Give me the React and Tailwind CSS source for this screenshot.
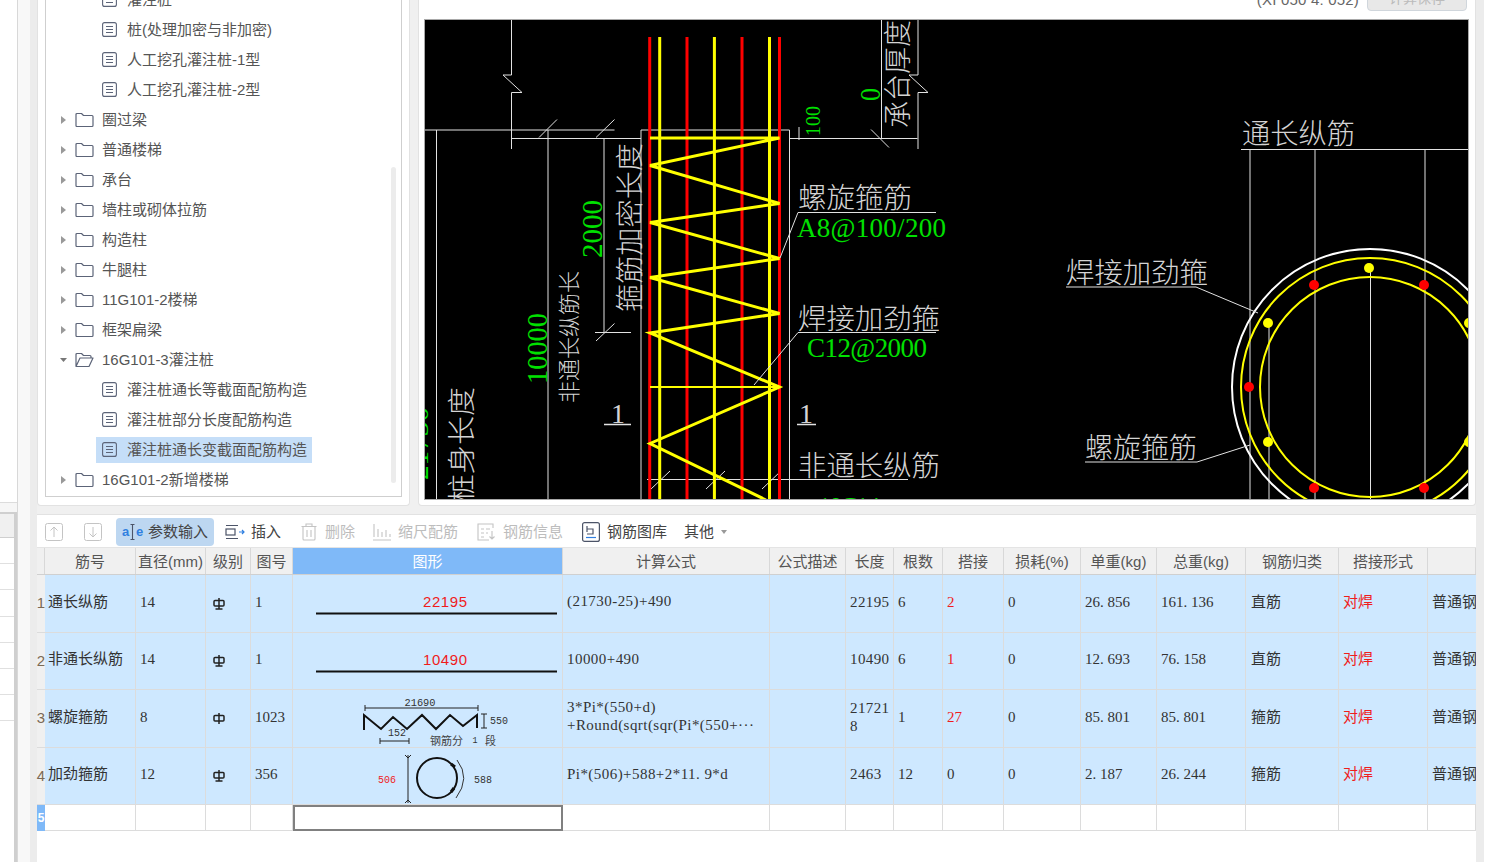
import React from "react";

const SANS = "font-['Liberation_Sans','Noto_Sans_CJK_SC',sans-serif]";
const SERIF = "font-['Liberation_Serif','Noto_Sans_CJK_SC',serif]";
const CAD_FONT = "'Noto Sans CJK SC', sans-serif";
const NUM_FONT = "'Liberation Serif', serif";

const COLS =
  "grid grid-cols-[8px_91px_70px_45px_42px_270px_207px_76px_48px_49px_61px_77px_76px_89px_93px_89px_48px]";

const treeRows = [
  { type: "doc", label: "灌注桩" },
  { type: "doc", label: "桩(处理加密与非加密)" },
  { type: "doc", label: "人工挖孔灌注桩-1型" },
  { type: "doc", label: "人工挖孔灌注桩-2型" },
  { type: "folder", label: "圈过梁" },
  { type: "folder", label: "普通楼梯" },
  { type: "folder", label: "承台" },
  { type: "folder", label: "墙柱或砌体拉筋" },
  { type: "folder", label: "构造柱" },
  { type: "folder", label: "牛腿柱" },
  { type: "folder", label: "11G101-2楼梯" },
  { type: "folder", label: "框架扁梁" },
  { type: "open", label: "16G101-3灌注桩" },
  { type: "doc", label: "灌注桩通长等截面配筋构造" },
  { type: "doc", label: "灌注桩部分长度配筋构造" },
  { type: "doc", label: "灌注桩通长变截面配筋构造", selected: true },
  { type: "folder", label: "16G101-2新增楼梯" },
];

const headers = ["", "筋号", "直径(mm)", "级别", "图号", "图形", "计算公式", "公式描述", "长度", "根数", "搭接", "损耗(%)", "单重(kg)", "总重(kg)", "钢筋归类", "搭接形式", ""];

const rows = [
  { n: 1, name: "通长纵筋", d: "14", fig: "1", shape: "line22195", formula: ["(21730-25)+490"], len: ["22195"], count: "6", lap: "2", loss: "0", unit: "26. 856", total: "161. 136", kind: "直筋", grade: true },
  { n: 2, name: "非通长纵筋", d: "14", fig: "1", shape: "line10490", formula: ["10000+490"], len: ["10490"], count: "6", lap: "1", loss: "0", unit: "12. 693", total: "76. 158", kind: "直筋", grade: true },
  { n: 3, name: "螺旋箍筋", d: "8", fig: "1023", shape: "spiral", formula: ["3*Pi*(550+d)", "+Round(sqrt(sqr(Pi*(550+···"], len: ["21721", "8"], count: "1", lap: "27", loss: "0", unit: "85. 801", total: "85. 801", kind: "箍筋", grade: false },
  { n: 4, name: "加劲箍筋", d: "12", fig: "356", shape: "hoop", formula: ["Pi*(506)+588+2*11. 9*d"], len: ["2463"], count: "12", lap: "0", loss: "0", unit: "2. 187", total: "26. 244", kind: "箍筋", grade: true, plainLap: true },
];

function Caret({ open }) {
  return (
    <svg width="7" height="10" viewBox="0 0 7 10" className="shrink-0">
      {open ? <path d="M0 3h7L3.5 7z" fill="#777" /> : <path d="M1 1l5 4-5 4z" fill="#999" />}
    </svg>
  );
}

function FolderIcon({ open }) {
  return (
    <svg width="19" height="16" viewBox="0 0 19 16" fill="none" stroke="#5c6478" strokeWidth="1.2" className="shrink-0 block">
      {open ? (
        <path d="M1 14V2.5Q1 1.5 2 1.5h4.5l2 2H15q1 0 1 1V6M1 14.5h13l4-8.5H5z" strokeLinejoin="round" />
      ) : (
        <path d="M1 13.5V2.5Q1 1.5 2 1.5h4.5l2 2H17q1 0 1 1v9q0 1-1 1H2q-1 0-1-1z" strokeLinejoin="round" />
      )}
    </svg>
  );
}

function DocIcon() {
  return (
    <svg width="15" height="15" viewBox="0 0 15 15" fill="none" stroke="#5c6478" strokeWidth="1.1" className="shrink-0 -mt-[2px]">
      <rect x="0.6" y="0.6" width="13.8" height="13.8" rx="2" />
      <path d="M4 4.5h7M4 7.5h7M4 10.5h7" />
    </svg>
  );
}

function TreeRow({ row }) {
  if (row.type === "doc") {
    return (
      <div className="h-[30px] flex items-center">
        <div className={`ml-[50px] h-[26px] pl-[6px] pr-[5px] flex items-center gap-[10px] ${row.selected ? "bg-[#c5def8]" : ""}`}>
          <DocIcon />
          <span className="whitespace-nowrap">{row.label}</span>
        </div>
      </div>
    );
  }
  return (
    <div className="h-[30px] flex items-center pl-[14px]">
      <Caret open={row.type === "open"} />
      <span className="ml-[8px] -mt-[1px]"><FolderIcon open={row.type === "open"} /></span>
      <span className="ml-[8px] whitespace-nowrap">{row.label}</span>
    </div>
  );
}

function CadText({ x, y, w, size = 28, color = "#d4d4d4", children }) {
  return (
    <text x={x} y={y} fontSize={size} fill={color} fontFamily={CAD_FONT} fontWeight="300" textLength={w} lengthAdjust="spacingAndGlyphs">
      {children}
    </text>
  );
}

function VText({ x, y, w, size = 28, color = "#d4d4d4", font = CAD_FONT, children }) {
  return (
    <text transform={`translate(${x} ${y}) rotate(-90)`} fontSize={size} fill={color} fontFamily={font} fontWeight="300" textLength={w} lengthAdjust="spacingAndGlyphs">
      {children}
    </text>
  );
}

function GreenText({ x, y, w, size = 27, children }) {
  return (
    <text x={x} y={y} fontSize={size} fill="#00e000" fontFamily={NUM_FONT} textLength={w} lengthAdjust="spacing">
      {children}
    </text>
  );
}

function CadDrawing() {
  const white = { stroke: "#e2e2e2", strokeWidth: 1, fill: "none" };
  return (
    <svg viewBox="425 20 1043 479" width="1043" height="479" className="block bg-black">
      {/* outline of the pile and the cap */}
      <path {...white} d="M511.5 20V75H503L522 92.5H511.5V149" />
      <path {...white} d="M881.5 20V138.5M918 20V75H909L928 92.5H918V149" />
      <path {...white} d="M425 130H614.5M641 130H789.5M511.5 138.5H641M789.5 138.5H917.5" />
      <path {...white} d="M436.5 130V499M548 130V499M604 138.5V332M641 130V499M789.5 130V499" />
      <path {...white} d="M539 137.5L557 119.5M596 137.5L614.5 119.5M871 129.5L889 147.5M799 127V140M595 332.5H631M596 341L614.5 323.5" />
      <path {...white} d="M651 489L670 471M706 489L725 471M762 489L781 471M647 479.5H908" />
      {/* bars */}
      <path stroke="#ff0000" strokeWidth="3" fill="none" d="M649.7 37V499M687 37V499M742 37V499M779.5 37V499" />
      <path stroke="#ffff00" strokeWidth="3" fill="none" d="M659.7 37V499M714.4 37V499M769.5 37V499" />
      <path stroke="#ffff00" strokeWidth="3" fill="none" d="M650 138H779.5L650 165.5L779.5 203.5L650 222.5L779.5 258.5L650 277.5L779.5 313.5L650 333L779.5 387L650 443.5L766 500" />
      <path stroke="#ffff00" strokeWidth="2" fill="none" d="M650 387H780" />
      {/* leaders */}
      <path {...white} d="M780 258L798 212.5H936M754 385L798 332.5H936" />
      <path {...white} strokeWidth="1.5" d="M604 424.5H631M797 424.5H816" />
      <CadText x={798} y={208} w={114}>螺旋箍筋</CadText>
      <GreenText x={797} y={237} w={149}>A8@100/200</GreenText>
      <CadText x={798} y={329} w={142}>焊接加劲箍</CadText>
      <GreenText x={807} y={357} w={120}>C12@2000</GreenText>
      <CadText x={798} y={476} w={142}>非通长纵筋</CadText>
      <GreenText x={818} y={515} w={62} size={26}>10C14</GreenText>
      <text x={611} y={423} fontSize="28" fill="#d4d4d4" fontFamily={NUM_FONT}>1</text>
      <text x={799} y={423} fontSize="28" fill="#d4d4d4" fontFamily={NUM_FONT}>1</text>
      {/* vertical labels */}
      <VText x={640} y={312} w={169}>箍筋加密长度</VText>
      <VText x={602} y={258} w={58} size={30} color="#00e000" font={NUM_FONT}>2000</VText>
      <VText x={577} y={403} w={132} size={22}>非通长纵筋长</VText>
      <VText x={547} y={384} w={71} size={30} color="#00e000" font={NUM_FONT}>10000</VText>
      <VText x={472} y={503} w={116}>桩身长度</VText>
      <VText x={428} y={480} w={73} size={26} color="#00e000" font={NUM_FONT}>21730</VText>
      <VText x={908} y={128} w={108}>承台厚度</VText>
      <VText x={880} y={101} w={13} size={30} color="#00e000" font={NUM_FONT}>0</VText>
      <VText x={820} y={136} w={30} size={20} color="#00e000" font={NUM_FONT}>100</VText>
      {/* section 1-1 */}
      <CadText x={1242} y={144} w={113}>通长纵筋</CadText>
      <path {...white} d="M1241 149.5H1469M1250 150V499M1315 150V499M1425 150V499M1269 324V499M1370.5 268V499" />
      <circle cx="1370" cy="387" r="138" stroke="#ffffff" strokeWidth="2" fill="none" />
      <circle cx="1370" cy="387" r="129" stroke="#ffff00" strokeWidth="2" fill="none" />
      <circle cx="1370" cy="387" r="110" stroke="#ffff00" strokeWidth="2" fill="none" />
      {[[1369, 268], [1268, 323], [1469, 323], [1268, 442], [1469, 442]].map(([x, y]) => (
        <circle key={`${x}-${y}`} cx={x} cy={y} r="5" fill="#ffff00" />
      ))}
      {[[1314, 285], [1424, 285], [1249, 387], [1314, 488], [1424, 488]].map(([x, y]) => (
        <circle key={`${x}-${y}`} cx={x} cy={y} r="5" fill="#ff0000" />
      ))}
      <CadText x={1066} y={283} w={142}>焊接加劲箍</CadText>
      <CadText x={1085} y={458} w={112}>螺旋箍筋</CadText>
      <path {...white} d="M1066 287H1196L1258 313M1085 462H1197L1250 445" />
    </svg>
  );
}

function ToolIcon({ name }) {
  const gray = "#c4c4c4";
  const dark = "#4c5468";
  if (name === "up" || name === "down") {
    return (
      <svg width="18" height="18" viewBox="0 0 18 18" fill="none" stroke={gray} strokeWidth="1" className="block">
        <rect x="0.5" y="0.5" width="17" height="17" rx="2" />
        <path d={name === "up" ? "M9 14V4M5.5 7.5L9 4l3.5 3.5" : "M9 4v10M5.5 10.5L9 14l3.5-3.5"} />
      </svg>
    );
  }
  if (name === "param") {
    return (
      <svg width="22" height="20" viewBox="0 0 22 20" fill="none" className="block">
        <text x="0" y="14" fontSize="13" fontWeight="700" fill="#2f7fe0" fontFamily="'Liberation Sans', sans-serif">a</text>
        <text x="14" y="14" fontSize="13" fontWeight="700" fill="#2f7fe0" fontFamily="'Liberation Sans', sans-serif">e</text>
        <path d="M8.5 2.5h4M8.5 17.5h4M10.5 2.5v15" stroke="#4c5468" strokeWidth="1.1" />
      </svg>
    );
  }
  if (name === "insert") {
    return (
      <svg width="20" height="16" viewBox="0 0 20 16" fill="none" stroke={dark} strokeWidth="1.2" className="block">
        <path d="M1 1.5h12M1 14.5h12" />
        <rect x="1" y="5" width="9" height="6" />
        <path d="M14 8h5M17 6l2 2-2 2" stroke="#2f7fe0" />
      </svg>
    );
  }
  if (name === "trash") {
    return (
      <svg width="16" height="18" viewBox="0 0 16 18" fill="none" stroke={gray} strokeWidth="1.1" className="block">
        <path d="M0.5 3.5h15M5 3.5V1h6v2.5M2 3.5V16q0 1 1 1h10q1 0 1-1V3.5M6 7v7M10 7v7" />
      </svg>
    );
  }
  if (name === "scale") {
    return (
      <svg width="18" height="18" viewBox="0 0 18 18" fill="none" stroke={gray} strokeWidth="1.1" className="block">
        <path d="M1 1v13M5 6v8M9 9v5M13 7v7M17 11v3M0 17h18" />
      </svg>
    );
  }
  if (name === "info") {
    return (
      <svg width="20" height="18" viewBox="0 0 20 18" fill="none" stroke={gray} strokeWidth="1.1" className="block">
        <path d="M16 5V1H1v16h11" />
        <path d="M4 6h3M9 6h4M4 10h3M9 10h2M4 14h3M15 8v8M12.5 13.5L15 16l2.5-2.5" />
      </svg>
    );
  }
  return (
    <svg width="18" height="20" viewBox="0 0 18 20" fill="none" stroke={dark} strokeWidth="1.2" className="block">
      <rect x="0.6" y="0.6" width="16.8" height="18.8" rx="2" />
      <path d="M5 4v6M5 7h6v5H5" />
      <path d="M4 15.5h10" stroke="#2f7fe0" />
    </svg>
  );
}

function Toolbar() {
  return (
    <div className="h-[33px] flex items-center pl-[8px] pt-[2px] text-[15px] text-[#444] whitespace-nowrap border-b border-[#e4e4e4]">
      <ToolIcon name="up" />
      <span className="ml-[21px]"><ToolIcon name="down" /></span>
      <div className="ml-[14px] w-[98px] h-[28px] rounded-[4px] bg-[#bdd7f1] flex items-center pl-[6px] gap-[4px]">
        <ToolIcon name="param" />
        <span>参数输入</span>
      </div>
      <span className="ml-[11px]"><ToolIcon name="insert" /></span>
      <span className="ml-[6px]">插入</span>
      <span className="ml-[20px]"><ToolIcon name="trash" /></span>
      <span className="ml-[8px] text-[#bdbdbd]">删除</span>
      <span className="ml-[18px]"><ToolIcon name="scale" /></span>
      <span className="ml-[7px] text-[#bdbdbd]">缩尺配筋</span>
      <span className="ml-[19px]"><ToolIcon name="info" /></span>
      <span className="ml-[6px] text-[#bdbdbd]">钢筋信息</span>
      <span className="ml-[19px]"><ToolIcon name="library" /></span>
      <span className="ml-[7px]">钢筋图库</span>
      <span className="ml-[17px]">其他</span>
      <svg width="6" height="4" viewBox="0 0 6 4" className="ml-[7px]"><path d="M0 0h6L3 4z" fill="#999" /></svg>
    </div>
  );
}

function GradeMark({ bar }) {
  return (
    <svg width="12" height="12" viewBox="0 0 12 12" fill="none" stroke="#222" strokeWidth="1.5" className="mt-[4px]">
      <rect x="1" y="2.5" width="10" height="5.5" rx="1" />
      <path d="M6 0v11" />
      {bar && <path d="M2.5 11h7" />}
    </svg>
  );
}

function ShapeText({ x, y, w, size = 10, color = "#333", children }) {
  return (
    <text x={x} y={y} fontSize={size} fill={color} fontFamily="'Liberation Mono', monospace" textLength={w} textAnchor="middle" lengthAdjust="spacingAndGlyphs">
      {children}
    </text>
  );
}

function Shape({ kind }) {
  if (kind === "line22195" || kind === "line10490") {
    return (
      <svg width="270" height="57" viewBox="0 0 270 57" className="block">
        <text x="152" y="32" fontSize="15" fill="#f01c1c" textAnchor="middle" textLength="44" fontFamily="'Liberation Sans', sans-serif">
          {kind === "line22195" ? "22195" : "10490"}
        </text>
        <path d="M23 38.5H264" stroke="#111" strokeWidth="2.2" />
      </svg>
    );
  }
  if (kind === "spiral") {
    return (
      <svg width="270" height="57" viewBox="0 0 270 57" fill="none" className="block">
        <path d="M72 18H185M72 15v6M185 15v6" stroke="#222" strokeWidth="1" />
        <ShapeText x={127} y={16} w={31}>21690</ShapeText>
        <path d="M71 40V25L88 39L100 27L114 39L129 25L143 39L157 25L170 36L184 25V38" stroke="#111" strokeWidth="2" />
        <path d="M191 24V38M188 24h6M188 38h6" stroke="#222" strokeWidth="1" />
        <ShapeText x={206} y={34} w={18}>550</ShapeText>
        <path d="M87 51H116M87 48v6M116 48v6" stroke="#222" strokeWidth="1" />
        <ShapeText x={104} y={46} w={18}>152</ShapeText>
        <text x="137" y="55" fontSize="11" fill="#444" fontFamily={CAD_FONT}>钢筋分</text>
        <ShapeText x={182} y={53} w={5} size={9}>1</ShapeText>
        <text x="192" y="55" fontSize="11" fill="#444" fontFamily={CAD_FONT}>段</text>
      </svg>
    );
  }
  return (
    <svg width="270" height="57" viewBox="0 0 270 57" fill="none" className="block">
      <path d="M115 7V55M112 7l3 3 3-3M112 55l3-3 3 3" stroke="#222" strokeWidth="1" />
      <ShapeText x={94} y={35} w={18} color="#f01c1c">506</ShapeText>
      <circle cx="144" cy="30" r="20" stroke="#111" strokeWidth="2" />
      <path d="M158 16l4 3M158 44l3-4" stroke="#111" strokeWidth="3" />
      <path d="M164 12Q178 30 163 50" stroke="#333" strokeWidth="1" />
      <ShapeText x={190} y={35} w={18}>588</ShapeText>
    </svg>
  );
}

function Cell({ className = "", children }) {
  return (
    <div className={`border-r border-b border-[#dcdcdc] overflow-hidden flex items-center pb-[3px] ${className}`}>
      {children}
    </div>
  );
}

function DataRow({ row }) {
  const num = `${SERIF} text-[15px] text-[#333] pl-[4px] whitespace-nowrap`;
  return (
    <div className={`${COLS} h-[57.5px] bg-[#cee8ff] text-[15px] text-[#333]`}>
      <div className="bg-[#f0f0f0] border-b border-[#dcdcdc] flex items-center justify-center text-[15px] text-[#7a6a55]">{row.n}</div>
      <Cell className="pl-[3px] whitespace-nowrap">{row.name}</Cell>
      <Cell className={num}>{row.d}</Cell>
      <Cell className="pl-[7px]"><GradeMark bar={row.grade} /></Cell>
      <Cell className={num}>{row.fig}</Cell>
      <div className="border-r border-b border-[#dcdcdc] overflow-hidden"><Shape kind={row.shape} /></div>
      <Cell className={`${num} tracking-[0.45px]`}>
        <div className="flex flex-col gap-[1px] leading-[17px]">
          {row.formula.map(line => <div key={line}>{line}</div>)}
        </div>
      </Cell>
      <Cell />
      <Cell className={`${num} pl-[2px] tracking-[0.4px]`}>
        <div className="leading-[18px]">
          {row.len.map(line => <div key={line}>{line}</div>)}
        </div>
      </Cell>
      <Cell className={num}>{row.count}</Cell>
      <Cell className={`${num} ${row.plainLap ? "" : "text-[#f01c1c]"}`}>{row.lap}</Cell>
      <Cell className={num}>{row.loss}</Cell>
      <Cell className={num}>{row.unit}</Cell>
      <Cell className={num}>{row.total}</Cell>
      <Cell className="pl-[5px] whitespace-nowrap">{row.kind}</Cell>
      <Cell className="pl-[4px] text-[#f01c1c] whitespace-nowrap">对焊</Cell>
      <Cell className="pl-[4px] whitespace-nowrap border-r-0">普通钢筋</Cell>
    </div>
  );
}

function EmptyRow() {
  const cells = Array.from({ length: 11 });
  return (
    <div className={`${COLS} h-[26px] bg-white`}>
      <div className="bg-[#7fb9f8] flex items-center justify-center text-[12px] font-bold text-white">5</div>
      <Cell />
      <Cell />
      <Cell />
      <Cell />
      <div className="border-2 border-[#808080]" />
      {cells.map((_, i) => <Cell key={i} />)}
    </div>
  );
}

export default function App() {
  return (
    <div className={`h-[862px] w-[1485px] overflow-hidden flex bg-[#f0f0f0] ${SANS}`}>
      {/* neighbouring panel, cut off at the window edge */}
      <div className="w-[37px] shrink-0 flex">
        <div className="w-[18px] flex flex-col bg-white border-r border-[#d8d8d8]">
          <div className="h-[503px] border-b border-[#dcdcdc]" />
          <div className="h-[9px] bg-[#f6f6f6]" />
          <div className="flex-1 flex flex-col border-r-[3px] border-[#cfcfcf]">
            <div className="h-[26px] bg-[#f0f0f0] border-t-2 border-b border-[#cfcfcf]" />
            {[0, 1, 2, 3, 4, 5, 6].map(i => (
              <div key={i} className="h-[26.2px] border-b border-[#e0e0e0]" />
            ))}
          </div>
        </div>
        <div className="w-[12px] bg-[#f8f8f8]" />
        <div className="w-[7px] bg-[#ececec]" />
      </div>

      <div className="w-[1439px] shrink-0 flex flex-col">
        <div className="h-[506px] flex gap-[8px]">
          {/* tree */}
          <div className="w-[373px] h-full bg-white rounded-b-[4px] border-x border-b border-[#e2e2e2] px-[7px] pb-[8px]">
            <div className="relative h-full border-x border-b border-[#cfcfcf] overflow-hidden text-[15px] text-[#555]">
              <div className="-mt-[15px]">
                {treeRows.map(row => <TreeRow key={row.label} row={row} />)}
              </div>
              <div className="absolute left-[345px] top-[167px] w-[5px] h-[316px] rounded-full bg-[#ececec]" />
            </div>
          </div>

          {/* drawing */}
          <div className="w-[1058px] h-full bg-white rounded-b-[4px] border-x border-b border-[#e2e2e2] px-[5px]">
            <div className="h-[19px] flex justify-end gap-[8px] pr-[3px]">
              <div className="-mt-[7px] h-[14px] text-[15px] leading-[14px] tracking-[0.2px] text-[#666] whitespace-nowrap">(XI 050 4: 052)</div>
              <div className="-mt-[15px] w-[100px] h-[26px] rounded-[4px] bg-[#e8e8e8] border border-[#d0d6dc] text-[14px] text-[#bbb] flex items-center justify-center">计算保存</div>
            </div>
            <div className="w-[1045px] border border-[#a8a8a8]">
              <CadDrawing />
            </div>
          </div>
        </div>

        {/* rebar table */}
        <div className="mt-[8px] flex-1 bg-white border-t border-[#e2e2e2]">
          <Toolbar />
          <div className={`${COLS} h-[27px] bg-[#f0f0f0] text-[15px] text-[#555] border-b border-[#d0d0d0]`}>
            {headers.map((h, i) => (
              <div
                key={i}
                className={`flex items-center justify-center whitespace-nowrap border-r border-[#d8d8d8] pt-[3px] ${h === "图形" ? "bg-[#7fb9f8] text-white" : ""}`}
              >
                {h}
              </div>
            ))}
          </div>
          {rows.map(row => <DataRow key={row.n} row={row} />)}
          <EmptyRow />
        </div>
      </div>

      <div className="w-[8px] shrink-0 bg-[#ececec]" />
      <div className="w-[1px] shrink-0 bg-white" />
    </div>
  );
}
